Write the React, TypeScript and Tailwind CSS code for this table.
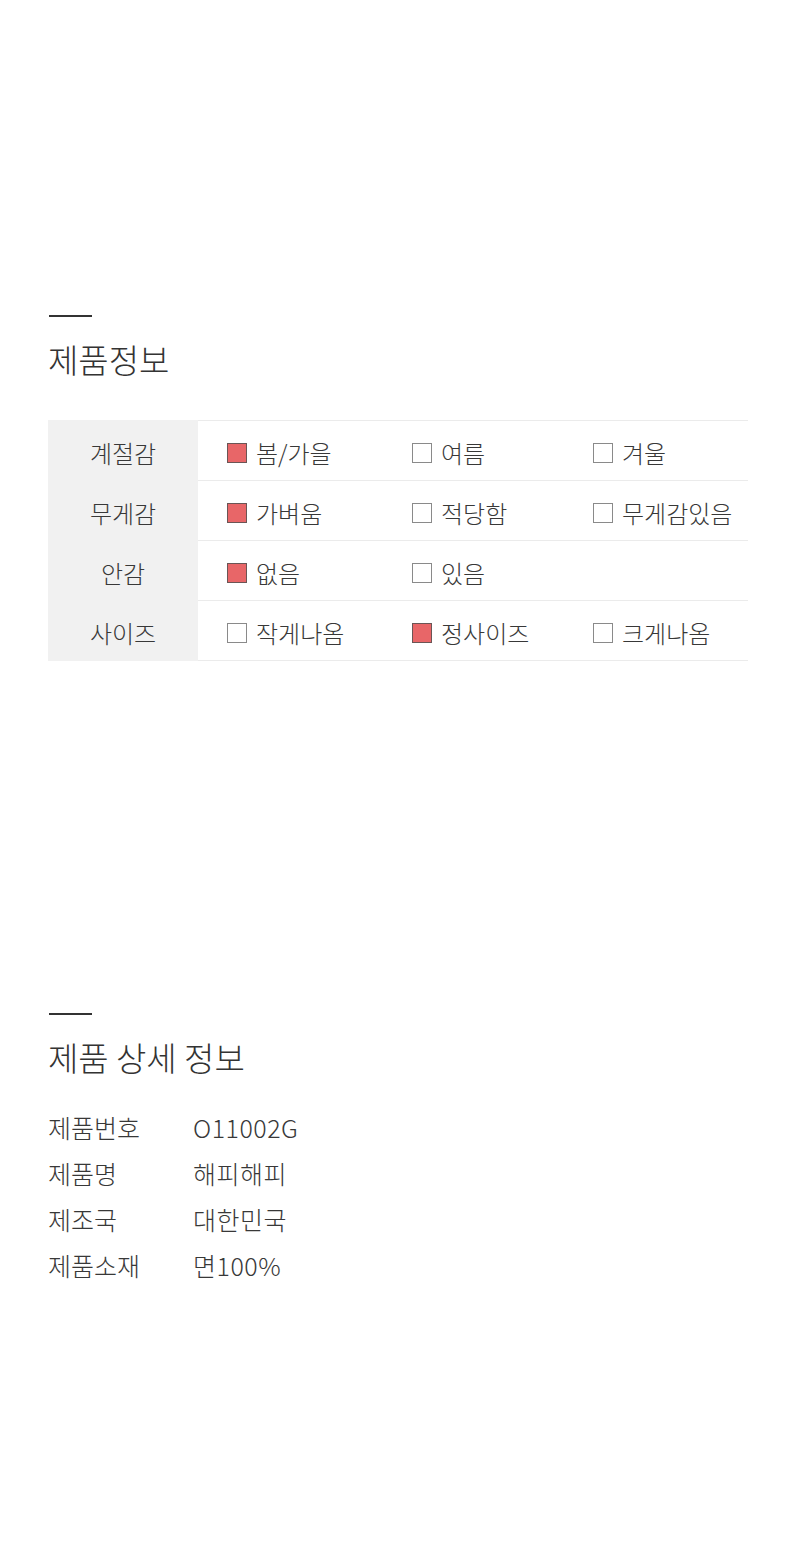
import React from "react";

type Option = { label: string; checked: boolean };
type Row = { name: string; options: Option[] };

const rows: Row[] = [
    {
        name: "계절감",
        options: [
            { label: "봄/가을", checked: true },
            { label: "여름", checked: false },
            { label: "겨울", checked: false },
        ],
    },
    {
        name: "무게감",
        options: [
            { label: "가벼움", checked: true },
            { label: "적당함", checked: false },
            { label: "무게감있음", checked: false },
        ],
    },
    {
        name: "안감",
        options: [
            { label: "없음", checked: true },
            { label: "있음", checked: false },
        ],
    },
    {
        name: "사이즈",
        options: [
            { label: "작게나옴", checked: false },
            { label: "정사이즈", checked: true },
            { label: "크게나옴", checked: false },
        ],
    },
];

const details = [
    { label: "제품번호", value: "O11002G" },
    { label: "제품명", value: "해피해피" },
    { label: "제조국", value: "대한민국" },
    { label: "제품소재", value: "면100%" },
];

const colWidths = ["w-[185px]", "w-[181px]", "flex-1"];

function Check({ checked }: { checked: boolean }) {
    return checked ? (
        <span className="inline-block w-[20px] h-[20px] shrink-0 bg-[#e86668] border border-[#6b5555]" />
    ) : (
        <span className="inline-block w-[20px] h-[20px] shrink-0 bg-white border border-[#8a8a8a]" />
    );
}

function SectionTitle({ children }: { children: React.ReactNode }) {
    return (
        <div>
            <div className="ml-[1px] w-[43px] h-[2px] bg-[#333333]" />
            <h2 className="mt-[20px] text-[33px] leading-[44px] font-light text-[#333333]">{children}</h2>
        </div>
    );
}

export default function App() {
    return (
        <div
            className="w-[800px] min-h-[1552px] bg-white px-[48px] pt-[315px] text-[#383838] font-light"
            style={{ fontFamily: '"Noto Sans CJK KR", "Noto Sans", sans-serif' }}
        >
            <SectionTitle>제품정보</SectionTitle>
            <div className="mt-[39px] w-[700px]">
                {rows.map((row, i) => (
                    <div key={row.name} className="flex">
                        <div className="w-[150px] shrink-0 bg-[#f1f1f1] flex items-center justify-center pt-[4px] text-[24px]">
                            {row.name}
                        </div>
                        <div
                            className={
                                "flex-1 flex items-center pl-[29px] pt-[4px] border-b border-[#ebebeb] " +
                                (i === 0 ? "border-t h-[61px]" : "h-[60px]")
                            }
                        >
                            {row.options.map((opt, j) => (
                                <div key={opt.label} className={colWidths[j] + " flex items-center gap-[9px]"}>
                                    <Check checked={opt.checked} />
                                    <span className="text-[24px] leading-none">{opt.label}</span>
                                </div>
                            ))}
                        </div>
                    </div>
                ))}
            </div>

            <div className="mt-[352px]">
                <SectionTitle>제품 상세 정보</SectionTitle>
                <div className="mt-[25px]">
                    {details.map((d) => (
                        <div key={d.label} className="flex text-[25px] leading-[46px]">
                            <div className="w-[145px] shrink-0">{d.label}</div>
                            <div className="tracking-[0.5px]">{d.value}</div>
                        </div>
                    ))}
                </div>
            </div>
        </div>
    );
}
